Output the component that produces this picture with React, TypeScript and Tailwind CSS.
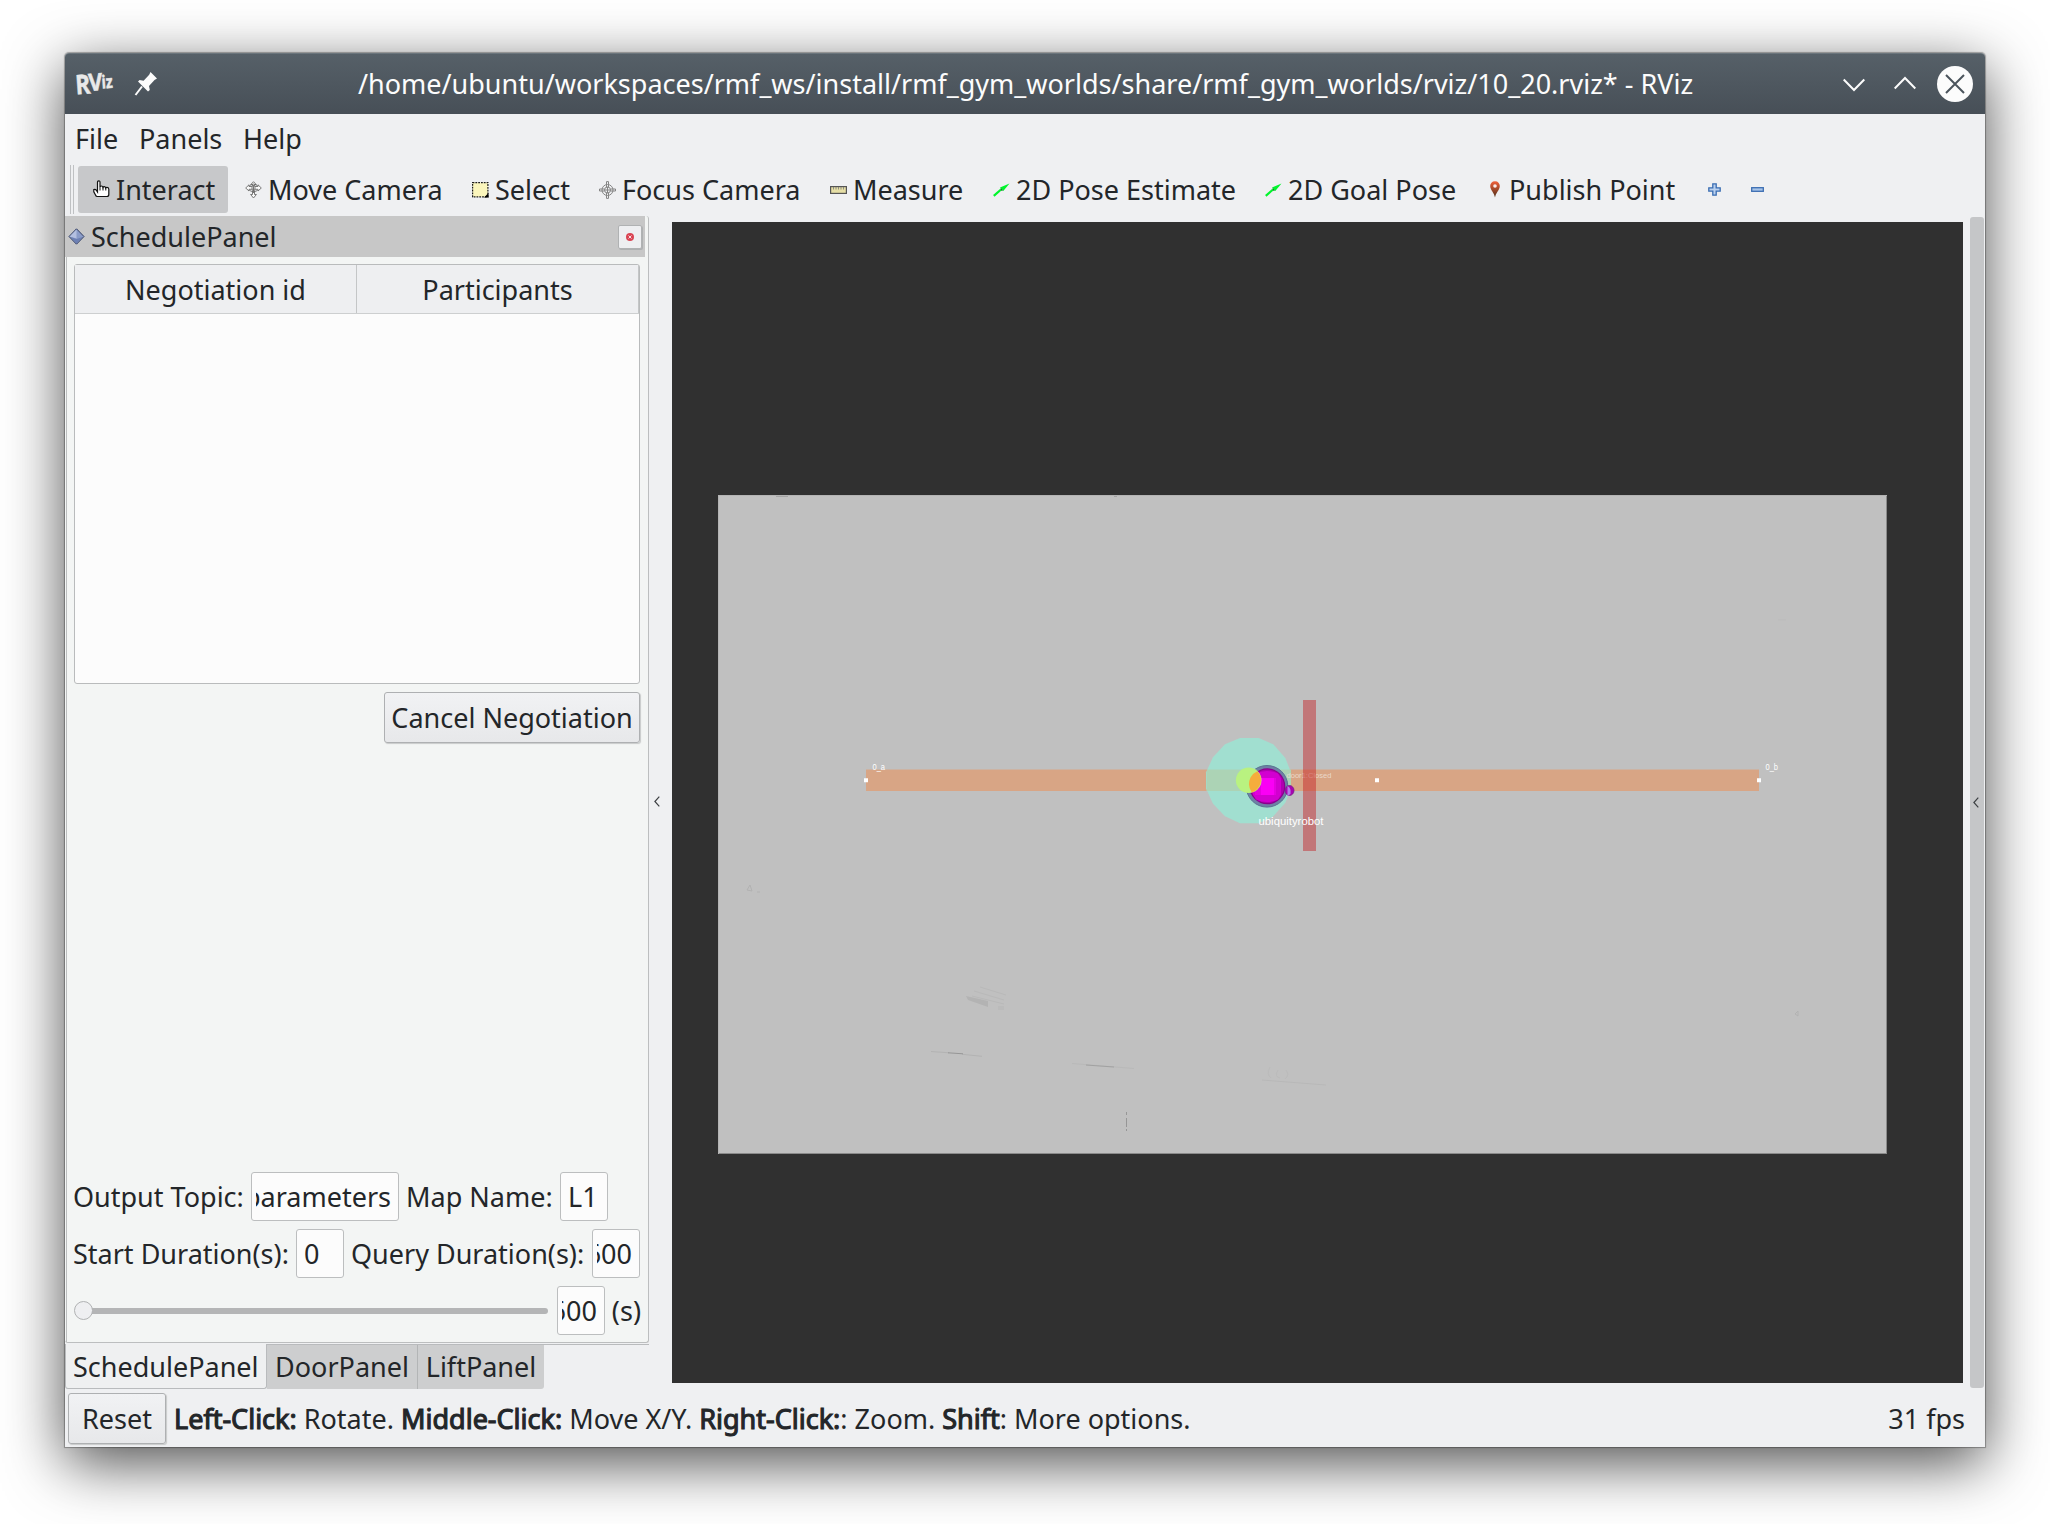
import React from "react";

function Input({ text, box, end }: { text: string; box: string; end?: boolean }) {
  return (
    <div className={`flex h-[49px] shrink-0 items-center rounded-[3px] border border-[#bcbebf] bg-[#fcfcfc] px-[4px] ${box}`}>
      <div className={`flex w-full overflow-hidden whitespace-nowrap px-[3px] ${end ? "justify-end pl-0" : ""}`}>
        <span>{text}</span>
      </div>
    </div>
  );
}

const HandIcon = () => (
  <svg width="17" height="19" viewBox="0 0 17 19" className="block">
    <path d="M4.500 12V2.500Q4.500.800 5.800.800T7 2.500V6.800q.3-.8 1.500-.8t1.500 1.200q.2-.6 1.300-.6t1.400 1.200q.3-.4 1.300-.4 1.500 0 1.800 1.600V14.500q0 2-2 2H4.200q-1.200 0-1.700-1.500L.8 11.800V9.500q1.500-.6 2.500.6l1.200 1.900z" fill="#fff" stroke="#111" strokeWidth="1.200" />
    <path d="M7 6.500v4M10 7v3.500M12.800 7.500v3" stroke="#111" strokeWidth="1" />
  </svg>
);

const MoveIcon = () => (
  <svg width="17" height="18" viewBox="0 0 17 18" className="block" fill="none" stroke="#6c6c6c" strokeWidth=".9">
    <path d="M8.500.700 5.800 3.500h1.700V5.500H4V3.800L.700 7 4 10V8.300h9V10l3.300-3L13 3.800V5.500H9.500V3.500h1.700z" fill="#fafafa" />
    <path d="M7.500 9.500v4H5.600l2.900 3.500 2.900-3.500H9.500v-4z" fill="#fafafa" />
    <path d="M4.500 4.500q4-3 8 0M4.500 9.500q4 3 8 0" />
    <path d="M8.500 4v8M6 7h5" />
  </svg>
);

const SelectIcon = () => (
  <svg width="17" height="16" viewBox="0 0 17 16" className="block">
    <rect x=".6" y=".6" width="15.300" height="14.300" fill="#fbf6bc" stroke="#1c1c1c" strokeWidth="1.200" strokeDasharray="1.800 1" />
    <path d="M16.500 11v4.500H12z" fill="#000" />
  </svg>
);

const FocusIcon = () => (
  <svg width="17" height="18" viewBox="0 0 17 18" className="block" fill="none" stroke="#858585" strokeWidth="1">
    <circle cx="8.500" cy="9" r="5.500" />
    <circle cx="8.500" cy="9" r="3" />
    <path d="M7.500 6V.6h2V6M7.500 12v5.400h2V12M5.500 8H.5v2h5M11.500 8h5v2h-5M8.500 6v6M5.500 9h6" />
  </svg>
);

const RulerIcon = () => (
  <svg width="17" height="8" viewBox="0 0 17 8" className="block">
    <rect x=".6" y=".6" width="15.800" height="6.800" fill="#e6dfa6" stroke="#555" strokeWidth="1.200" />
    <path d="M3.500 1v2.500M6 1v2.500M8.500 1v2.500M11 1v2.500M13.500 1v2.500" stroke="#777" strokeWidth=".8" />
  </svg>
);

const ArrowIcon = () => (
  <svg width="17" height="14" viewBox="0 0 17 14" className="block">
    <path d="M.8 12.800 8 6.500" stroke="#00f52c" strokeWidth="2.200" />
    <path d="M16.500.5 7 4.500 10.300 8z" fill="#00f52c" />
    <path d="M7.500 4.800 10 7.800 8 7.500z" fill="#0a6b1c" />
  </svg>
);

const PinIcon = () => (
  <svg width="10" height="17" viewBox="0 0 10 17" className="block">
    <defs>
      <linearGradient id="pin" x1="0" y1="0" x2="0" y2="1">
        <stop offset="0" stopColor="#f2603a" />
        <stop offset="1" stopColor="#50301a" />
      </linearGradient>
    </defs>
    <path d="M5 .2C2 .2.200 2.300.200 5c0 4 4.200 7 4.800 11.500C5.600 12 9.800 9 9.800 5 9.800 2.300 8 .2 5 .2z" fill="url(#pin)" />
    <circle cx="5" cy="5" r="1.800" fill="#f8eeee" />
  </svg>
);

const PlusIcon = () => (
  <svg width="13" height="13" viewBox="0 0 13 13" className="block">
    <path d="M4.800.8h3.400v4h4v3.400h-4v4H4.800v-4h-4V4.800h4z" fill="#b9d0ee" stroke="#3a6db2" strokeWidth="1.300" />
  </svg>
);

const MinusIcon = () => (
  <svg width="13" height="5" viewBox="0 0 13 5" className="block">
    <rect x=".7" y=".7" width="11.600" height="3.600" fill="#a8c4e8" stroke="#3a6db2" strokeWidth="1.300" />
  </svg>
);

/** A toolbar entry: an icon slot followed by its label. */
function Tool({ icon, label, box, active }: { icon: React.ReactNode; label: string; box: string; active?: boolean }) {
  return (
    <div className={`flex h-[47px] shrink-0 items-center rounded-[3px] ${active ? "bg-[#c7c8ca]" : ""} ${box}`}>
      <div className="mr-[6px] flex w-[17px] shrink-0 justify-center">{icon}</div>
      <span className="whitespace-nowrap">{label}</span>
    </div>
  );
}

function TitleBar() {
  return (
    <div className="flex h-[61px] shrink-0 items-center rounded-t-[4px] border-t border-[#6b757c] bg-linear-to-b from-[#566068] to-[#474f57] text-[#fcfcfc]">
      <div className="ml-[10px] flex h-[48px] w-[42px] items-center">
        <svg width="42" height="48" viewBox="0 -9 42 48" className="block font-['Open_Sans',sans-serif] font-bold" fill="#e9e9e9" stroke="#e9e9e9" strokeWidth=".5">
          <text x="1" y="25.500" fontSize="27" textLength="15" lengthAdjust="spacingAndGlyphs" transform="rotate(-4 1 25)">R</text>
          <text x="14" y="22" fontSize="24" textLength="14" lengthAdjust="spacingAndGlyphs" transform="rotate(-4 14 21)">V</text>
          <text x="27" y="19.500" fontSize="18" textLength="11" lengthAdjust="spacingAndGlyphs" transform="rotate(-4 26 19)">iz</text>
        </svg>
      </div>
      <svg width="24" height="26" viewBox="0 0 24 26" className="ml-[17px] block" fill="#fcfcfc">
        <path d="M16.500 1 23 7.500 20.500 9l-5.500 6 .8 4-1.800 1.600L4 10.600 5.600 9l4 .7 5.600-6z" />
        <path d="M8 15.500 1.500 24" stroke="#fcfcfc" strokeWidth="2" />
      </svg>
      <div className="ml-[200px] w-[1340px] whitespace-nowrap">
        <span>/home/ubuntu/workspaces/rmf_ws/install/rmf_gym_worlds/share/rmf_gym_worlds/rviz/10_20.rviz* - RViz</span>
      </div>
      <div className="ml-auto mr-[12px] flex items-center gap-[28px]">
        <svg width="22" height="14" viewBox="0 0 22 14" className="mr-[1px] mt-[2px] block" fill="none" stroke="#fcfcfc" strokeWidth="2"><path d="m.7 1.500 10.300 10.500L21.300 1.500" /></svg>
        <svg width="22" height="14" viewBox="0 0 22 14" className="mb-[2px] mr-[1px] block" fill="none" stroke="#fcfcfc" strokeWidth="2"><path d="M.7 12.500 11 2l10.300 10.500" /></svg>
        <svg width="36" height="36" viewBox="0 0 36 36" className="ml-[-8px] block"><circle cx="18" cy="18" r="18" fill="#fcfcfc" /><path d="m9 9 18 18M27 9 9 27" stroke="#4b545c" strokeWidth="2" /></svg>
      </div>
    </div>
  );
}

function MenuBar() {
  return (
    <div className="flex h-[51px] shrink-0 items-center pb-[2px] pl-[10px]">
      <span className="w-[64px]">File</span>
      <span className="w-[104px]">Panels</span>
      <span>Help</span>
    </div>
  );
}

function ToolBar() {
  return (
    <div className="flex h-[51px] shrink-0 items-start pl-[5px]">
      <div className="mr-[4px] h-[49px] w-[4px] border-x border-[#bfc1c3]" />
      <div className="flex pt-[1px]">
        <Tool active icon={<HandIcon />} label="Interact" box="w-[150px] pl-[15px]" />
        <Tool icon={<MoveIcon />} label="Move Camera" box="w-[227px] pl-[17px]" />
        <Tool icon={<SelectIcon />} label="Select" box="w-[128px] pl-[17px]" />
        <Tool icon={<FocusIcon />} label="Focus Camera" box="w-[230px] pl-[16px]" />
        <Tool icon={<RulerIcon />} label="Measure" box="w-[164px] pl-[17px]" />
        <Tool icon={<ArrowIcon />} label="2D Pose Estimate" box="w-[272px] pl-[16px]" />
        <Tool icon={<ArrowIcon />} label="2D Goal Pose" box="w-[221px] pl-[16px]" />
        <Tool icon={<PinIcon />} label="Publish Point" box="w-[238px] pl-[16px]" />
        <div className="flex h-[47px] w-[43px] items-center"><PlusIcon /></div>
        <div className="flex h-[47px] items-center"><MinusIcon /></div>
      </div>
    </div>
  );
}

function SchedulePanel() {
  return (
    <div className="flex h-[1127px] w-[584px] flex-col rounded-[3px] border-b border-r border-[#bcbebf] bg-[#f3f5f4]">
      <div className="flex h-[41px] w-[580px] shrink-0 items-center bg-[#c7c7c7] pl-[3px]">
        <svg width="17" height="17" viewBox="0 0 17 17" className="block">
          <path d="M8.500.8 16 8.500 8.500 16.200 1 8.500z" fill="#8b9cc8" stroke="#303c60" strokeWidth="1" />
          <path d="M8.500 1.500v9L1.700 8.500z" fill="#b4c0e0" />
          <path d="M8.500 15.500 2.500 9l6 2 6-2z" fill="#6d80b4" />
        </svg>
        <span className="ml-[6px]">SchedulePanel</span>
        <div className="ml-auto mr-[3px] flex h-[24px] w-[24px] items-center justify-center rounded-[2px] border border-[#b0b2b3] bg-[#eeeff1] shadow-[1px_1px_0_#aeb0b1]">
          <svg width="8" height="8" viewBox="0 0 8 8" className="block"><circle cx="4" cy="4" r="4" fill="#da4453" /><path d="m2.500 2.500 3 3m0-3-3 3" stroke="#f5dfe2" strokeWidth="1" /></svg>
        </div>
      </div>
      <div className="flex min-h-0 flex-1 flex-col border-l border-[#bcbebf] px-[7px] pt-[7px] ml-[1px]">
        <div className="h-[420px] w-[566px] shrink-0 rounded-[3px] border border-[#b9bbbc] bg-[#fcfcfc]">
          <div className="flex h-[49px] border-b border-[#cdcfd0] bg-[#eeeff1] pt-[2px]">
            <div className="-mt-[2px] flex w-[282px] items-center justify-center border-r border-[#c4c6c7] pt-[2px]">Negotiation id</div>
            <div className="-mt-[2px] flex flex-1 items-center justify-center border-r border-[#c4c6c7] pt-[2px]">Participants</div>
          </div>
        </div>
        <div className="mt-[8px] flex h-[51px] w-[256px] shrink-0 items-center justify-center self-start rounded-[3px] border border-[#aeb0b2] bg-linear-to-b from-[#f1f2f4] to-[#e7e8ea] shadow-[1px_1px_1px_#c8caca] ml-[310px] whitespace-nowrap">Cancel Negotiation</div>
        <div className="mt-auto flex flex-col gap-[8px] pb-[7px] whitespace-nowrap">
          <div className="flex items-center">
            <span className="ml-[-1px] w-[178px]">Output Topic:</span>
            <Input text="/rmf_schedule/parameters" box="w-[148px]" end />
            <span className="ml-[7px] w-[154px]">Map Name:</span>
            <Input text="L1" box="w-[48px]" />
          </div>
          <div className="flex items-center">
            <span className="ml-[-1px] w-[223px]">Start Duration(s):</span>
            <Input text="0" box="w-[48px]" />
            <span className="ml-[7px] w-[241px]">Query Duration(s):</span>
            <Input text="600" box="w-[48px]" end />
          </div>
          <div className="flex items-center">
            <div className="z-10 h-[19px] w-[19px] rounded-full border border-[#b0b2b3] bg-[#eeeff1]" />
            <div className="ml-[-2px] h-[6px] w-[457px] rounded-r-full bg-[#b4b5b6]" />
            <div className="w-[9px]" />
            <Input text="600" box="w-[48px]" end />
            <span className="ml-[7px]">(s)</span>
          </div>
        </div>
      </div>
    </div>
  );
}

function Dock() {
  return (
    <div className="flex w-[584px] shrink-0 flex-col">
      <SchedulePanel />
      <div className="mt-[1px] flex h-[45px] border-t border-[#b9bbbd]">
        <div className="mt-[-1px] flex h-[45px] w-[202px] items-center rounded-b-[3px] border-b border-l border-r border-[#b9bbbd] bg-[#eff0f1] pl-[7px] pt-[2px]">SchedulePanel</div>
        <div className="flex h-[44px] w-[151px] items-center justify-center border-r border-[#b3b5b6] bg-[#cdcecf]">DoorPanel</div>
        <div className="flex h-[44px] w-[126px] items-center justify-center rounded-br-[3px] bg-[#cdcecf]">LiftPanel</div>
      </div>
    </div>
  );
}

/** The 3D view: floor map, lane, door, robot and waypoints. */
function RenderView() {
  return (
    <svg width="1291" height="1161" viewBox="672 222 1291 1161" className="mt-[6px] block shrink-0 bg-[#303030] font-['Liberation_Sans',sans-serif]">
      <rect x="718" y="495" width="1169" height="659" fill="#c0c0c0" />
      <path d="M718 1153.500h1169M1886.500 495v659" stroke="#8a8a8a" strokeWidth="1" />
      <path d="M718.500 495v659M718 495.500h1169" stroke="#b4b4b4" strokeWidth="1" />
      <path d="M776 496.500h12M1114 496.500h3" stroke="#a4a4a4" strokeWidth="1" />
      <g fill="none" stroke="#b3b3b3" strokeWidth="1">
        <path d="m980 987 26 8M974 991l30 9M972 996l32 8" stroke="#b9b9b9" />
        <path d="m966 996 22 5v6l-20-7z" fill="#b3b3b3" stroke="none" />
        <path d="M998 1006h6v4h-6z" fill="#bbb" stroke="none" />
        <path d="m931 1051.500 18 1.300M962 1054.300l20 2" />
        <path d="m948 1052.800 15 1" stroke="#969696" />
        <path d="m1072 1063.500 62 5" stroke="#b9b9b9" />
        <path d="m1086 1065 28 2" stroke="#a2a2a2" />
        <path d="m1262 1080 64 5" stroke="#b8b8b8" />
        <path d="M1270 1067q-4 7 1 11M1278 1070q-4 7 2 8M1286 1070q4 5-1 9" stroke="#bbb" />
        <path d="M1126.500 1112v3M1126.500 1118v9M1126.500 1129v2" stroke="#969696" />
        <path d="m747 890 3-5 2 6zM757 892h3M1795 1014l3-3v5z" stroke="#b2b2b2" />
        <path d="M1778 620h8" stroke="#bbb" />
      </g>
      <rect x="866" y="769.500" width="893" height="21.500" fill="#d8a585" />
      <polygon points="1240,738 1258.700,738 1273.300,744.300 1285.300,758 1291,772.500 1291,789 1285.300,802.700 1273.300,816.300 1258.700,823.300 1240,823.300 1225,816.300 1213,803.700 1206,788.300 1206,772.500 1213,757.300 1225,744.300" fill="#a1dfd0" />
      <path d="M1207 769.500h84v21.500h-84.500v-18z" fill="#acd3b5" />
      <circle cx="1267" cy="786.300" r="20.800" fill="#6f7fa6" stroke="#587591" strokeWidth="1" />
      <circle cx="1267.300" cy="786.300" r="18" fill="#8a008c" />
      <circle cx="1267.300" cy="786.300" r="16.800" fill="#b000b0" />
      <path d="M1256 773.500q11-5 22 0l3 5v16l-3 5q-11 5-22 0l-3-5v-16z" fill="#d200d0" />
      <path d="M1255 778h21v17h-21z" fill="#e400e0" />
      <path d="M1261 778h13v17h-13z" fill="#fa00f5" />
      <ellipse cx="1289.500" cy="790.500" rx="4.500" ry="5" fill="#a903b0" stroke="#75208a" strokeWidth=".8" />
      <path d="M1287.500 786q4 2 3 8l-3 2z" fill="#b87aea" />
      <circle cx="1248.700" cy="780.300" r="12.800" fill="#b9f280" />
      <path d="M1257.300 771.200a12.800 12.800 0 0 1-5.500 21.200q-5-7-1.300-15 2-4 6.800-6.200z" fill="#f5ad3c" />
      <text x="1286.500" y="777.500" fontSize="8" fill="#efe0d5" opacity=".85" textLength="45" lengthAdjust="spacingAndGlyphs">door1:Closed</text>
      <rect x="1303" y="700" width="13" height="151" fill="#c51f22" fillOpacity=".46" />
      <text x="1258.500" y="824.500" fontSize="11" fill="#fff" textLength="65" lengthAdjust="spacingAndGlyphs">ubiquityrobot</text>
      <text x="872.500" y="769.500" fontSize="8.500" fill="#fff" textLength="12.500" lengthAdjust="spacingAndGlyphs">0_a</text>
      <text x="1765.500" y="769.500" fontSize="8.500" fill="#fff" textLength="12.500" lengthAdjust="spacingAndGlyphs">0_b</text>
      <path d="M864 778.300h4v4h-4zM1757 778.300h4v4h-4zM1375 778.300h4v4h-4z" fill="#fff" />
    </svg>
  );
}

const Chevron = () => (
  <svg width="6" height="11" viewBox="0 0 6 11" className="block" fill="none" stroke="#3d4043" strokeWidth="1.200"><path d="M5.300.7.9 5.500l4.400 4.800" /></svg>
);

function StatusBar() {
  const strong = "[-webkit-text-stroke:1.1px_#232629]";
  return (
    <div className="flex h-[55px] shrink-0 items-center whitespace-nowrap pb-[2px] pl-[3px]">
      <div className="flex h-[51px] w-[98px] items-center justify-center rounded-[3px] border border-[#aeb0b2] bg-linear-to-b from-[#f1f2f4] to-[#e7e8ea] shadow-[1px_1px_1px_#c8caca]">Reset</div>
      <div className="ml-[8px]">
        <span className={strong}>Left-Click:</span> Rotate. <span className={strong}>Middle-Click:</span> Move X/Y. <span className={strong}>Right-Click:</span>: Zoom. <span className={strong}>Shift</span>: More options.
      </div>
      <span className="ml-auto mr-[20px]">31 fps</span>
    </div>
  );
}

export default function App() {
  return (
    <div className="h-[1524px] w-[2050px] overflow-hidden bg-white pl-[65px] pt-[53px] font-['Noto_Sans',sans-serif] text-[27px] leading-[36px] text-[#232629]">
      <div className="flex h-[1394px] w-[1920px] flex-col rounded-t-[4px] bg-[#eff0f2] shadow-[0_0_1px_1px_rgba(0,0,0,0.3),0_16px_60px_rgba(0,0,0,0.7)]">
        <TitleBar />
        <MenuBar />
        <ToolBar />
        <div className="flex h-[1176px] shrink-0">
          <Dock />
          <div className="flex w-[23px] shrink-0 items-center justify-center pb-[5px] pr-[7px]"><Chevron /></div>
          <RenderView />
          <div className="ml-[7px] mt-[1px] flex h-[1171px] w-[14px] items-center justify-center rounded-[3px] bg-[#c5c6c8] pr-[2px]"><Chevron /></div>
        </div>
        <StatusBar />
      </div>
    </div>
  );
}
